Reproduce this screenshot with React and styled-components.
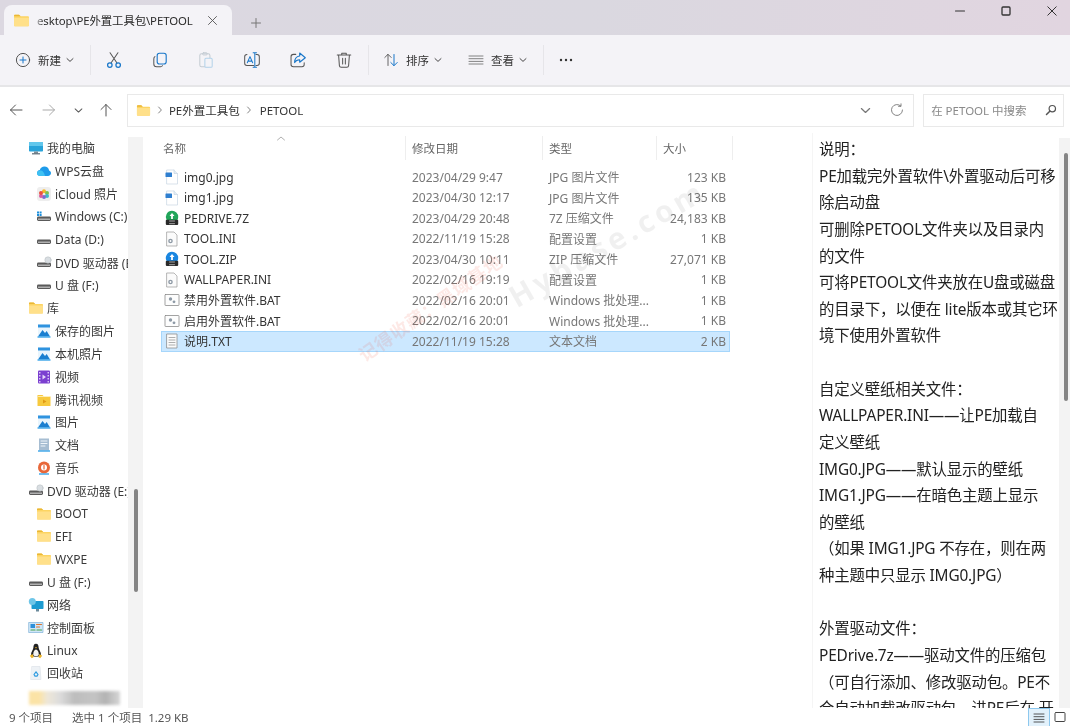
import React from "react"
import styled, { createGlobalStyle } from "styled-components"

const GlobalStyle = createGlobalStyle`
  html, body {
    margin: 0;
    padding: 0;
    background: #fff;
  }
  * {
    box-sizing: border-box;
  }
`

const FONT = `"Noto Sans", "Noto Sans CJK SC", sans-serif`

const Win = styled.div`
  width: 1070px;
  height: 726px;
  overflow: hidden;
  display: flex;
  flex-direction: column;
  background: #fff;
  font-family: ${FONT};
  font-size: 12px;
  color: #333;
  filter: blur(0.35px);
`

const TitleBar = styled.div`
  height: 35px;
  flex: none;
  display: flex;
  align-items: flex-end;
  padding-left: 4px;
  background: linear-gradient(90deg, #dcd8e1 0%, #dad8e0 55%, #e1d5e0 100%);
`

const Tab = styled.div`
  width: 228px;
  height: 30px;
  display: flex;
  align-items: center;
  padding-left: 9px;
  background: #f4f3f7;
  border-radius: 8px 8px 0 0;
`

const TabTitle = styled.div`
  width: 159px;
  margin-left: 7px;
  font-size: 11.4px;
  color: #2a2a2a;
  white-space: nowrap;
  letter-spacing: -0.1px;
  mask-image: linear-gradient(90deg, rgba(0, 0, 0, 0.35) 0, #000 7px);
`

const TabClose = styled.div`
  margin-left: 11px;
  display: flex;
  color: #555;
`

const NewTab = styled.div`
  margin-left: 18px;
  margin-bottom: 6px;
  display: flex;
  color: #777;
  align-self: flex-end;
`

const WinControls = styled.div`
  margin-left: auto;
  align-self: flex-start;
  display: flex;
  height: 22px;
  align-items: center;
  padding-right: 13px;
  gap: 36px;
  color: #333;
`

const Toolbar = styled.div`
  height: 52px;
  flex: none;
  display: flex;
  align-items: center;
  padding-left: 15px;
  background: #f4f3f7;
  border-bottom: 2px solid #e6e6e8;
`

const Sep = styled.div`
  width: 1px;
  height: 30px;
  background: #e6e5e9;
  margin: ${({ $m }) => $m || "0"};
`

const ToolLabelBtn = styled.div`
  display: flex;
  align-items: center;
  width: ${({ $w }) => $w}px;
  color: #333;
  font-size: 11.5px;
  span {
    margin-left: 7px;
    margin-right: 5px;
  }
`

const ToolIcon = styled.div`
  width: 46px;
  display: flex;
  justify-content: center;
`

const AddressRow = styled.div`
  height: 46px;
  flex: none;
  display: flex;
  align-items: center;
  background: #fff;
  padding-right: 6px;
`

const NavBtn = styled.div`
  width: ${({ $w }) => $w}px;
  display: flex;
  justify-content: center;
  color: ${({ $off }) => ($off ? "#a9a9a9" : "#555")};
`

const NavGroup = styled.div`
  width: 127px;
  display: flex;
  align-items: center;
  padding-left: 3px;
`

const AddressBox = styled.div`
  width: 788px;
  height: 33px;
  display: flex;
  align-items: center;
  padding-left: 8px;
  padding-right: 9px;
  border: 1px solid #e9e9e9;
  font-size: 11.5px;
  color: #333;
`

const Crumb = styled.span`
  margin-left: ${({ $ml }) => $ml}px;
`

const CrumbArrow = styled.span`
  display: flex;
  margin-left: ${({ $ml }) => $ml}px;
  color: #777;
`

const AddrEnd = styled.div`
  margin-left: auto;
  display: flex;
  align-items: center;
  gap: 19px;
  color: #777;
`

const SearchBox = styled.div`
  margin-left: 9px;
  width: 141px;
  height: 33px;
  display: flex;
  align-items: center;
  justify-content: space-between;
  padding: 0 6px 0 7px;
  border: 1px solid #e9e9e9;
  font-size: 11.5px;
  color: #8a8a8a;
  white-space: nowrap;
`

const Body = styled.div`
  flex: 1;
  min-height: 0;
  display: flex;
`

const Sidebar = styled.div`
  width: 128px;
  flex: none;
  padding-top: 4px;
  overflow: hidden;
`

const NavItem = styled.div`
  height: 22.83px;
  display: flex;
  align-items: center;
  padding-left: ${({ $level }) => ($level === 2 ? 36 : 28)}px;
  white-space: nowrap;
  font-size: 12px;
  color: #3a3a3a;
  svg {
    flex: none;
    margin-right: 3px;
  }
`

const BlurredItem = styled.div`
  margin: 6px 8px 0 29px;
  height: 14px;
  background: linear-gradient(90deg, #fbe3a6 0 11%, #eee7d8 20%, #dcdcdc 34%, #bdbdbd 50%, #c4c4c4 72%, #b3b3b3 84%, #d6d6d6 100%);
  filter: blur(1.5px);
`

const Gutter = styled.div`
  width: 15px;
  flex: none;
  margin-top: 4px;
  background: #f3f3f3;
  position: relative;
`

const Thumb = styled.div`
  position: absolute;
  left: ${({ $l }) => $l}px;
  top: ${({ $t }) => $t}px;
  width: ${({ $w }) => $w || 4}px;
  height: ${({ $h }) => $h}px;
  background: #858585;
  border-radius: 2px;
`

const FileArea = styled.div`
  width: 669px;
  flex: none;
  padding: 3px 0 0 18px;
  position: relative;
  overflow: hidden;
`

const HeaderRow = styled.div`
  display: grid;
  grid-template-columns: 245px 137px 114px 76px;
  height: 24px;
  align-items: center;
  color: #666;
  font-size: 11.5px;
`

const HeaderCell = styled.div`
  height: 100%;
  display: flex;
  align-items: center;
  position: relative;
  padding-left: 6px;
  border-right: 1px solid #eeeeee;
  &:first-child {
    padding-left: 2px;
  }
`

const SortCaret = styled.div`
  position: absolute;
  left: 115px;
  top: -2px;
  display: flex;
  color: #9a9a9a;
`

const Rows = styled.div`
  margin-top: 7px;
  width: 569px;
`

const Row = styled.div`
  display: grid;
  grid-template-columns: 245px 137px 114px 73px;
  height: 20.5px;
  align-items: center;
  color: #777;
  font-size: 12px;
  background: ${({ $sel }) => ($sel ? "#cce8ff" : "transparent")};
  box-shadow: ${({ $sel }) => ($sel ? "inset 0 0 0 1px #a6d6fb" : "none")};
`

const NameCell = styled.div`
  display: flex;
  align-items: center;
  padding-left: 3px;
  color: #333;
  white-space: nowrap;
  svg {
    flex: none;
    margin-right: 4px;
  }
`

const DateCell = styled.div`
  padding-left: 6px;
  white-space: nowrap;
`

const TypeCell = styled.div`
  padding-left: 6px;
  white-space: nowrap;
`

const SizeCell = styled.div`
  text-align: right;
  padding-right: 4px;
  white-space: nowrap;
`

const Watermark = styled.div`
  position: absolute;
  left: ${({ $l }) => $l}px;
  top: ${({ $t }) => $t}px;
  transform: rotate(${({ $deg }) => $deg}deg);
  transform-origin: left center;
  font-size: ${({ $size }) => $size}px;
  font-weight: 700;
  letter-spacing: ${({ $sp }) => $sp}px;
  color: ${({ $c }) => $c};
  white-space: nowrap;
  pointer-events: none;
`

const Preview = styled.div`
  flex: 1;
  display: flex;
  min-width: 0;
  position: relative;
  overflow: hidden;
`

const PreviewText = styled.div`
  width: 247px;
  flex: none;
  padding: 4px 0 0 6px;
  font-size: 15.4px;
  line-height: 26.63px;
  color: #222;
  border-left: 1px solid #f5f5f5;
  white-space: nowrap;
  overflow: hidden;
  letter-spacing: -0.15px;
`

const Line = styled.div`
  height: 26.63px;
`

const PreviewGutter = styled.div`
  flex: 1;
  margin-top: 5px;
  background: #f3f3f3;
  position: relative;
`

const StatusBar = styled.div`
  height: 18px;
  flex: none;
  display: flex;
  align-items: center;
  padding-left: 9px;
  font-size: 11.5px;
  color: #555;
  white-space: nowrap;
  position: relative;
`

const StatusItem = styled.span`
  margin-left: ${({ $ml }) => $ml || 0}px;
`

const ViewButtons = styled.div`
  margin-left: auto;
  display: flex;
  align-items: center;
  height: 100%;
  padding-right: 4px;
  gap: 4px;
`

const ViewBtn = styled.div`
  width: ${({ $w }) => $w}px;
  height: 100%;
  display: flex;
  align-items: center;
  justify-content: center;
  background: ${({ $on }) => ($on ? "#e2f1fb" : "transparent")};
  border: ${({ $on }) => ($on ? "1px solid #8dc8ee" : "none")};
  border-bottom: none;
  color: #444;
`

const S = ({ size = 16, vb = 16, children }) => (
  <svg width={size} height={size} viewBox={`0 0 ${vb} ${vb}`} fill="none" stroke="currentColor" strokeLinecap="round" strokeLinejoin="round">
    {children}
  </svg>
)

const Chevron = ({ size = 8 }) => (
  <S size={size} vb={8}>
    <path d="M1 2.6 4 5.4 7 2.6" strokeWidth="0.9" />
  </S>
)

const Folder = ({ size = 16 }) => (
  <S size={size}>
    <path d="M1 3.5C1 2.9 1.4 2.5 2 2.5h3.6l1.6 1.4H14c.6 0 1 .4 1 1v7.6c0 .6-.4 1-1 1H2c-.6 0-1-.4-1-1z" fill="#fcd462" stroke="none" />
    <path d="M1 5.4h14v7.1c0 .6-.4 1-1 1H2c-.6 0-1-.4-1-1z" fill="#ffe08a" stroke="none" />
    <path d="M1 3.5C1 2.9 1.4 2.5 2 2.5h3.6l1.6 1.4H1z" fill="#eab736" stroke="none" />
  </S>
)

const Drive = ({ windows, disc }) => (
  <S size={16}>
    <rect x="1" y="7.5" width="14" height="4.5" rx="1.4" fill="#5a5a5a" stroke="none" />
    <rect x="2" y="9.6" width="12" height="1.2" fill="#c8c8c8" stroke="none" />
    {windows && <path d="M1 2.5h2v2H1zM3.6 2.5h2v2h-2zM1 5h2v2H1zM3.6 5h2v2h-2z" fill="#1d8fdc" stroke="none" />}
    {disc && <circle cx="12" cy="5" r="3.2" fill="#d9dee2" stroke="#b5babf" strokeWidth="0.5" />}
  </S>
)

const Monitor = () => (
  <S size={16}>
    <rect x="1" y="2" width="14" height="9.5" rx="0.8" fill="#29a3d9" stroke="none" />
    <rect x="1" y="2" width="14" height="4" fill="#62c7ec" stroke="none" />
    <rect x="6" y="11.5" width="4" height="2" fill="#7d8b95" stroke="none" />
    <rect x="4" y="13.2" width="8" height="1.2" fill="#5a6a75" stroke="none" />
  </S>
)

const Cloud = () => (
  <S size={16}>
    <path d="M4.2 13C2.4 13 1 11.7 1 10c0-1.6 1.2-2.8 2.8-3C4.4 4.700 6.300 3.500 8.400 3.500c2.500 0 4.400 1.700 4.700 3.900C14.300 7.800 15 8.900 15 10.100 15 11.800 13.700 13 12 13z" fill="#1e9bea" stroke="none" />
    <path d="M1.300 9C2 7.800 3.300 7.300 5 7.600c2 .4 3.200 2.300 4 5.400H4.200C2.400 13 1 11.700 1 10z" fill="#3fc1f2" stroke="none" />
  </S>
)

const Photos = () => (
  <S size={16}>
    <rect x="1" y="1" width="14" height="14" rx="3" fill="#eeeeee" stroke="none" />
    <circle cx="8" cy="5.300" r="2" fill="#f6b72c" stroke="none" />
    <circle cx="11" cy="7" r="2" fill="#7cc152" stroke="none" />
    <circle cx="11" cy="10" r="2" fill="#3fb8c9" stroke="none" />
    <circle cx="8" cy="11" r="2" fill="#7a6cd0" stroke="none" />
    <circle cx="5" cy="10" r="2" fill="#d85aa0" stroke="none" />
    <circle cx="5" cy="7" r="2" fill="#ea5041" stroke="none" />
  </S>
)

const Picture = () => (
  <S size={16}>
    <rect x="2" y="1.500" width="12" height="12" fill="#e9f5fd" stroke="none" />
    <path d="M2 13.500 6.500 7l2.500 3 1.700-2 3.300 5.500z" fill="#1a7fd0" stroke="none" />
    <rect x="1.500" y="13.300" width="13" height="1.400" fill="#3aa4e8" stroke="none" />
    <path d="M2 1.500h12v3H2z" fill="#2f93df" stroke="none" />
  </S>
)

const Video = () => (
  <S size={16}>
    <rect x="2" y="1.500" width="12" height="13" rx="1" fill="#7b3fd0" stroke="none" />
    <path d="M3 3h1.500v1.500H3zM3 6h1.500v1.500H3zM3 9h1.500v1.500H3zM3 12h1.500v1.500H3zM11.500 3H13v1.500h-1.500zM11.500 6H13v1.500h-1.500zM11.500 9H13v1.500h-1.500zM11.500 12H13v1.500h-1.500z" fill="#d9c5f5" stroke="none" />
    <path d="M6.500 5.500 10 8l-3.500 2.500z" fill="#e3d6fa" stroke="none" />
  </S>
)

const TxVideo = () => (
  <S size={16}>
    <path d="M1.500 3h5l1.500 1.500h6.500V14h-13z" fill="#f7c93e" stroke="none" />
    <path d="M2.500 4.500h11" stroke="#fff2c4" strokeWidth="0.8" />
    <path d="M7 7.500 10.500 9.500 7 11.500z" fill="#e09a16" stroke="none" />
  </S>
)

const Doc = () => (
  <S size={16}>
    <rect x="3" y="1.500" width="10" height="12" fill="#a6bdd2" stroke="none" />
    <path d="M5 4h6M5 6.500h6M5 9h4" stroke="#eff5fa" strokeWidth="1" />
    <rect x="2" y="13.300" width="12" height="1.400" fill="#3aa4e8" stroke="none" />
  </S>
)

const Music = () => (
  <S size={16}>
    <circle cx="8" cy="7.500" r="6" fill="#e8683a" stroke="none" />
    <circle cx="8" cy="7.500" r="3" fill="#fff" stroke="none" />
    <path d="M8 5.500v3.500" stroke="#e8683a" strokeWidth="1.200" />
    <rect x="3" y="13.300" width="10" height="1.400" fill="#3aa4e8" stroke="none" />
  </S>
)

const Network = () => (
  <S size={16}>
    <rect x="3.500" y="4" width="12" height="8" rx="0.800" fill="#1d9bd1" stroke="none" />
    <circle cx="4.300" cy="4.500" r="3.500" fill="#6fc6e8" stroke="none" />
    <rect x="8" y="12" width="3" height="2.500" fill="#6b8a9b" stroke="none" />
  </S>
)

const ControlPanel = () => (
  <S size={16}>
    <rect x="1" y="2.500" width="14" height="10" fill="#cfe6f7" stroke="#7fb2d9" strokeWidth="0.700" />
    <rect x="2.500" y="4" width="4.500" height="4" fill="#2f8fd8" stroke="none" />
    <path d="M8.500 4.500h5M8.500 7h3" stroke="#e0752f" strokeWidth="1.200" />
    <path d="M3 10h4M9 10h4.500" stroke="#4aa04a" strokeWidth="1.200" />
  </S>
)

const Tux = () => (
  <S size={16}>
    <path d="M8 .8C5.800.8 5.400 3 5.400 4.600 5.400 6.500 3 8.800 3 11.500 3 12.800 4.500 13.800 8 13.800s5-1 5-2.300C13 8.800 10.600 6.500 10.600 4.600 10.600 3 10.200.8 8 .8z" fill="#222" stroke="none" />
    <path d="M8 6.500c-1.500 0-2.800 2.400-2.800 4.800 0 1.300 1.100 2 2.800 2s2.800-.7 2.800-2C10.800 8.900 9.500 6.500 8 6.500z" fill="#f4f4f4" stroke="none" />
    <path d="M1.800 12.800 4.500 11l1.300 3-2 1.200zM14.200 12.800 11.500 11l-1.300 3 2 1.200zM7 4.600 8 4l1 .6-1 .9z" fill="#eeb52a" stroke="none" />
  </S>
)

const Recycle = () => (
  <S size={16}>
    <path d="M4 1.500h8l1 13H3z" fill="#eef2f6" stroke="#d4dbe2" strokeWidth="0.500" />
    <path d="M6 9.500 8 6.800l2 2.700-1 1.600H7z" fill="none" stroke="#2e9be0" strokeWidth="1.200" />
  </S>
)

const JpgFile = () => (
  <S size={16}>
    <path d="M3 1h7l3.500 3.500V15H3z" fill="#fff" stroke="#c9d6e2" strokeWidth="0.700" />
    <path d="M10 1v3.500h3.500" fill="#e3eef6" stroke="#c9d6e2" strokeWidth="0.700" />
    <rect x="1.500" y="3.500" width="6.500" height="4.500" rx="0.500" fill="#2f7fd0" stroke="none" />
  </S>
)

const Archive = ({ color }) => (
  <S size={16}>
    <path d="M8 .8a6.200 6.200 0 0 1 6.200 6.200c0 1.200-.3 2.300-.9 3.200H2.700A6.200 6.200 0 0 1 8 .8z" fill={color} stroke="none" />
    <path d="M8 3 5.500 6h1.600v3h1.800V6h1.600z" fill="#fff" stroke="none" />
    <rect x="1.800" y="9.800" width="12.400" height="5.200" rx="1" fill="#2a2a2a" stroke="none" />
    <path d="M5.500 11h5M5.500 13.700h5" stroke="#ddd" strokeWidth="0.700" />
  </S>
)

const IniFile = () => (
  <S size={16}>
    <path d="M3 1h7l3 3v11H3z" fill="#fbfbfb" stroke="#9a9a9a" strokeWidth="0.700" />
    <circle cx="6.500" cy="10" r="2.300" fill="#8e9aa6" stroke="none" />
    <circle cx="6.500" cy="10" r="0.900" fill="#fff" stroke="none" />
  </S>
)

const BatFile = () => (
  <S size={16}>
    <rect x="1" y="2.500" width="14" height="11" rx="0.500" fill="#fdfdfd" stroke="#8c8c8c" strokeWidth="0.800" />
    <circle cx="6.500" cy="7" r="1.700" fill="#8e9aa6" stroke="none" />
    <circle cx="10" cy="9.800" r="1.400" fill="#8e9aa6" stroke="none" />
  </S>
)

const TxtFile = () => (
  <S size={16}>
    <path d="M3 1h10v14H3z" fill="#fbfbfb" stroke="#8f8f8f" strokeWidth="0.800" />
    <path d="M5 4.500h6M5 7h6M5 9.500h6M5 12h6" stroke="#9a9a9a" strokeWidth="0.800" />
  </S>
)

const navItems = [
  { label: "我的电脑", icon: <Monitor />, level: 1 },
  { label: "WPS云盘", icon: <Cloud />, level: 2 },
  { label: "iCloud 照片", icon: <Photos />, level: 2 },
  { label: "Windows (C:)", icon: <Drive windows />, level: 2 },
  { label: "Data (D:)", icon: <Drive />, level: 2 },
  { label: "DVD 驱动器 (E:)", icon: <Drive disc />, level: 2 },
  { label: "U 盘 (F:)", icon: <Drive />, level: 2 },
  { label: "库", icon: <Folder />, level: 1 },
  { label: "保存的图片", icon: <Picture />, level: 2 },
  { label: "本机照片", icon: <Picture />, level: 2 },
  { label: "视频", icon: <Video />, level: 2 },
  { label: "腾讯视频", icon: <TxVideo />, level: 2 },
  { label: "图片", icon: <Picture />, level: 2 },
  { label: "文档", icon: <Doc />, level: 2 },
  { label: "音乐", icon: <Music />, level: 2 },
  { label: "DVD 驱动器 (E:)", icon: <Drive disc />, level: 1 },
  { label: "BOOT", icon: <Folder />, level: 2 },
  { label: "EFI", icon: <Folder />, level: 2 },
  { label: "WXPE", icon: <Folder />, level: 2 },
  { label: "U 盘 (F:)", icon: <Drive />, level: 1 },
  { label: "网络", icon: <Network />, level: 1 },
  { label: "控制面板", icon: <ControlPanel />, level: 1 },
  { label: "Linux", icon: <Tux />, level: 1 },
  { label: "回收站", icon: <Recycle />, level: 1 },
]

const files = [
  { name: "img0.jpg", date: "2023/04/29 9:47", type: "JPG 图片文件", size: "123 KB", icon: <JpgFile /> },
  { name: "img1.jpg", date: "2023/04/30 12:17", type: "JPG 图片文件", size: "135 KB", icon: <JpgFile /> },
  { name: "PEDRIVE.7Z", date: "2023/04/29 20:48", type: "7Z 压缩文件", size: "24,183 KB", icon: <Archive color="#21a55a" /> },
  { name: "TOOL.INI", date: "2022/11/19 15:28", type: "配置设置", size: "1 KB", icon: <IniFile /> },
  { name: "TOOL.ZIP", date: "2023/04/30 10:11", type: "ZIP 压缩文件", size: "27,071 KB", icon: <Archive color="#1a86e0" /> },
  { name: "WALLPAPER.INI", date: "2022/02/16 19:19", type: "配置设置", size: "1 KB", icon: <IniFile /> },
  { name: "禁用外置软件.BAT", date: "2022/02/16 20:01", type: "Windows 批处理...", size: "1 KB", icon: <BatFile /> },
  { name: "启用外置软件.BAT", date: "2022/02/16 20:01", type: "Windows 批处理...", size: "1 KB", icon: <BatFile /> },
  { name: "说明.TXT", date: "2022/11/19 15:28", type: "文本文档", size: "2 KB", icon: <TxtFile />, selected: true },
]

const noteLines = [
  "说明：",
  "PE加载完外置软件\\外置驱动后可移",
  "除启动盘",
  "可删除PETOOL文件夹以及目录内",
  "的文件",
  "可将PETOOL文件夹放在U盘或磁盘",
  "的目录下，以便在 lite版本或其它环",
  "境下使用外置软件",
  "",
  "自定义壁纸相关文件：",
  "WALLPAPER.INI——让PE加载自",
  "定义壁纸",
  "IMG0.JPG——默认显示的壁纸",
  "IMG1.JPG——在暗色主题上显示",
  "的壁纸",
  "（如果 IMG1.JPG 不存在，则在两",
  "种主题中只显示 IMG0.JPG）",
  "",
  "外置驱动文件：",
  "PEDrive.7z——驱动文件的压缩包",
  "（可自行添加、修改驱动包。PE不",
  "会自动加载改驱动包，进PE后在 开",
]

export default function App() {
  return (
    <Win>
      <GlobalStyle />
      <TitleBar>
        <Tab>
          <Folder size={17} />
          <TabTitle>esktop\PE外置工具包\PETOOL</TabTitle>
          <TabClose>
            <S size={11} vb={11}>
              <path d="M1.500 1.500l8 8M9.500 1.500l-8 8" strokeWidth="0.900" />
            </S>
          </TabClose>
        </Tab>
        <NewTab>
          <S size={12} vb={12}>
            <path d="M6 1.500v9M1.500 6h9" strokeWidth="1" />
          </S>
        </NewTab>
        <WinControls>
          <S size={10} vb={10}>
            <path d="M.5 5h9" strokeWidth="1.100" />
          </S>
          <S size={10} vb={10}>
            <rect x="1" y="1" width="8" height="8" rx="1" strokeWidth="1.300" />
          </S>
          <S size={10} vb={10}>
            <path d="M.8.8l8.400 8.400M9.200.8.800 9.200" strokeWidth="1" />
          </S>
        </WinControls>
      </TitleBar>

      <Toolbar>
        <ToolLabelBtn $w={75}>
          <S size={16}>
            <circle cx="8" cy="8" r="6.600" stroke="#444" strokeWidth="0.900" />
            <path d="M8 5v6M5 8h6" stroke="#1977c9" strokeWidth="1" />
          </S>
          <span>新建</span>
          <Chevron />
        </ToolLabelBtn>
        <Sep />
        <ToolIcon>
          <S size={18}>
            <path d="M4.500 1.500 10.500 10.500M11.500 1.500 5.500 10.500" stroke="#555" strokeWidth="0.900" />
            <circle cx="4.300" cy="12.500" r="2" stroke="#1977c9" strokeWidth="1.100" />
            <circle cx="11.700" cy="12.500" r="2" stroke="#1977c9" strokeWidth="1.100" />
          </S>
        </ToolIcon>
        <ToolIcon>
          <S size={18}>
            <rect x="5.500" y="2" width="8" height="9.500" rx="2" stroke="#1977c9" strokeWidth="1" />
            <path d="M3.500 5C2.700 5.500 2.500 6 2.500 7v4.500C2.500 13 3.500 14 5 14h3.500c.8 0 1.400-.4 1.700-1" stroke="#555" strokeWidth="0.900" />
          </S>
        </ToolIcon>
        <ToolIcon>
          <S size={18}>
            <rect x="2.500" y="2.500" width="9" height="11.500" rx="1.500" stroke="#c3cbd2" strokeWidth="0.900" />
            <rect x="5" y="1.500" width="4" height="2" rx="0.700" stroke="#c3cbd2" strokeWidth="0.800" />
            <rect x="7" y="6.500" width="6.500" height="8" rx="1" fill="#f4f3f7" stroke="#b3d2ea" strokeWidth="0.900" />
          </S>
        </ToolIcon>
        <ToolIcon>
          <S size={18}>
            <path d="M3.500 3.200C2.300 3.200 1.500 4 1.500 5.200v5.600c0 1.200.8 2 2 2h6M11.500 3.200h1c1.200 0 2 .8 2 2v5.600c0 1.200-.8 2-2 2h-1" stroke="#555" strokeWidth="0.900" />
            <path d="M3.800 10.500 6.200 5 8.600 10.500M4.600 9h3.200" stroke="#1977c9" strokeWidth="0.900" />
            <path d="M10.500 1.500v13M9 1.500h3M9 14.500h3" stroke="#1977c9" strokeWidth="0.900" />
          </S>
        </ToolIcon>
        <ToolIcon>
          <S size={18}>
            <path d="M6 3H4C2.700 3 1.800 3.800 1.800 5v7C1.800 13.200 2.700 14 4 14h7.500c1.200 0 2-.8 2-2v-1.500" stroke="#555" strokeWidth="0.900" />
            <path d="M9.500 1.800 14.500 6 9.500 10V7.800C7.500 7.800 6 8.500 5 10.300c0-3.300 1.700-5.400 4.500-5.800z" stroke="#1977c9" strokeWidth="1" />
          </S>
        </ToolIcon>
        <ToolIcon>
          <S size={18}>
            <path d="M2 3.500h12M6 3.500V2h4v1.500M3.200 3.500l.7 9.500c.1 1 .7 1.500 1.600 1.500h5c.9 0 1.500-.5 1.600-1.500l.7-9.500" stroke="#555" strokeWidth="0.900" />
            <path d="M6.800 6.500v5M9.200 6.500v5" stroke="#555" strokeWidth="0.900" />
          </S>
        </ToolIcon>
        <Sep $m="0 14px 0 1px" />
        <ToolLabelBtn $w={85}>
          <S size={16}>
            <path d="M5 13.500v-11M1.800 5.500 5 2.300 8.200 5.500" stroke="#555" strokeWidth="0.900" />
            <path d="M11 2.500v11M7.800 10.500 11 13.700l3.200-3.200" stroke="#1977c9" strokeWidth="1" />
          </S>
          <span>排序</span>
          <Chevron />
        </ToolLabelBtn>
        <ToolLabelBtn $w={75}>
          <S size={16}>
            <path d="M1 4h14M1 6.700h14M1 9.400h14M1 12h14" stroke="#666" strokeWidth="0.800" />
          </S>
          <span>查看</span>
          <Chevron />
        </ToolLabelBtn>
        <Sep $m="0 14px 0 0" />
        <S size={16}>
          <circle cx="3" cy="8" r="1.200" fill="#333" stroke="none" />
          <circle cx="8" cy="8" r="1.200" fill="#333" stroke="none" />
          <circle cx="13" cy="8" r="1.200" fill="#333" stroke="none" />
        </S>
      </Toolbar>

      <AddressRow>
        <NavGroup>
          <NavBtn $w={26}>
            <S size={14} vb={14}>
              <path d="M13 7H1.500M6.500 2 1.500 7l5 5" strokeWidth="1" />
            </S>
          </NavBtn>
          <NavBtn $w={40} $off>
            <S size={14} vb={14}>
              <path d="M1 7h11.500M7.500 2l5 5-5 5" strokeWidth="1" />
            </S>
          </NavBtn>
          <NavBtn $w={18}>
            <Chevron size={9} />
          </NavBtn>
          <NavBtn $w={38}>
            <S size={14} vb={14}>
              <path d="M7 13V1.500M2 6.500l5-5 5 5" strokeWidth="1" />
            </S>
          </NavBtn>
        </NavGroup>
        <AddressBox>
          <Folder size={15} />
          <CrumbArrow $ml={5}>
            <S size={8} vb={8}>
              <path d="M2.600 1 5.400 4 2.600 7" strokeWidth="0.900" />
            </S>
          </CrumbArrow>
          <Crumb $ml={5}>PE外置工具包</Crumb>
          <CrumbArrow $ml={5}>
            <S size={8} vb={8}>
              <path d="M2.600 1 5.400 4 2.600 7" strokeWidth="0.900" />
            </S>
          </CrumbArrow>
          <Crumb $ml={7}>PETOOL</Crumb>
          <AddrEnd>
            <Chevron size={11} />
            <S size={14} vb={14}>
              <path d="M12.500 7A5.500 5.500 0 1 1 10.800 3M11 .8V3.300H8.500" strokeWidth="0.900" />
            </S>
          </AddrEnd>
        </AddressBox>
        <SearchBox>
          在 PETOOL 中搜索
          <S size={12} vb={12}>
            <circle cx="7.300" cy="4.700" r="3.200" stroke="#555" strokeWidth="1.200" />
            <path d="M4.800 7.200 1.500 10.500" stroke="#555" strokeWidth="1.500" />
          </S>
        </SearchBox>
      </AddressRow>

      <Body>
        <Sidebar>
          {navItems.map((item, i) => (
            <NavItem key={i} $level={item.level}>
              {item.icon}
              {item.label}
            </NavItem>
          ))}
          <BlurredItem />
        </Sidebar>
        <Gutter>
          <Thumb $l={6} $t={352} $h={103} />
        </Gutter>

        <FileArea>
          <HeaderRow>
            <HeaderCell>
              名称
              <SortCaret>
                <S size={10} vb={10}>
                  <path d="M1.500 6 5 3l3.500 3" strokeWidth="0.800" />
                </S>
              </SortCaret>
            </HeaderCell>
            <HeaderCell>修改日期</HeaderCell>
            <HeaderCell>类型</HeaderCell>
            <HeaderCell>大小</HeaderCell>
          </HeaderRow>
          <Rows>
            {files.map((f) => (
              <Row key={f.name} $sel={f.selected}>
                <NameCell>
                  {f.icon}
                  {f.name}
                </NameCell>
                <DateCell>{f.date}</DateCell>
                <TypeCell>{f.type}</TypeCell>
                <SizeCell>{f.size}</SizeCell>
              </Row>
            ))}
          </Rows>
          <Watermark $l={217} $t={210} $deg={-35} $size={18} $sp={1} $c="rgba(240,70,50,0.12)">
            记得收藏：黑域基地
          </Watermark>
          <Watermark $l={368} $t={145} $deg={-30} $size={30} $sp={4} $c="rgba(0,0,0,0.06)">
            Hybase.com
          </Watermark>
        </FileArea>

        <Preview>
          <PreviewText>
            {noteLines.map((l, i) => (
              <Line key={i}>{l}</Line>
            ))}
          </PreviewText>
          <PreviewGutter>
            <Thumb $l={5} $t={15} $h={248} />
          </PreviewGutter>
        </Preview>
      </Body>

      <StatusBar>
        <StatusItem>9 个项目</StatusItem>
        <StatusItem $ml={19}>选中 1 个项目</StatusItem>
        <StatusItem $ml={6}>1.29 KB</StatusItem>
        <ViewButtons>
          <ViewBtn $w={22} $on>
            <S size={14} vb={14}>
              <path d="M2 3h10M2 5.700h10M2 8.400h10M2 11h10" strokeWidth="0.900" />
            </S>
          </ViewBtn>
          <ViewBtn $w={12}>
            <S size={12} vb={12}>
              <rect x="1" y="1.500" width="10" height="9" rx="1" strokeWidth="1" />
            </S>
          </ViewBtn>
        </ViewButtons>
      </StatusBar>
    </Win>
  )
}
